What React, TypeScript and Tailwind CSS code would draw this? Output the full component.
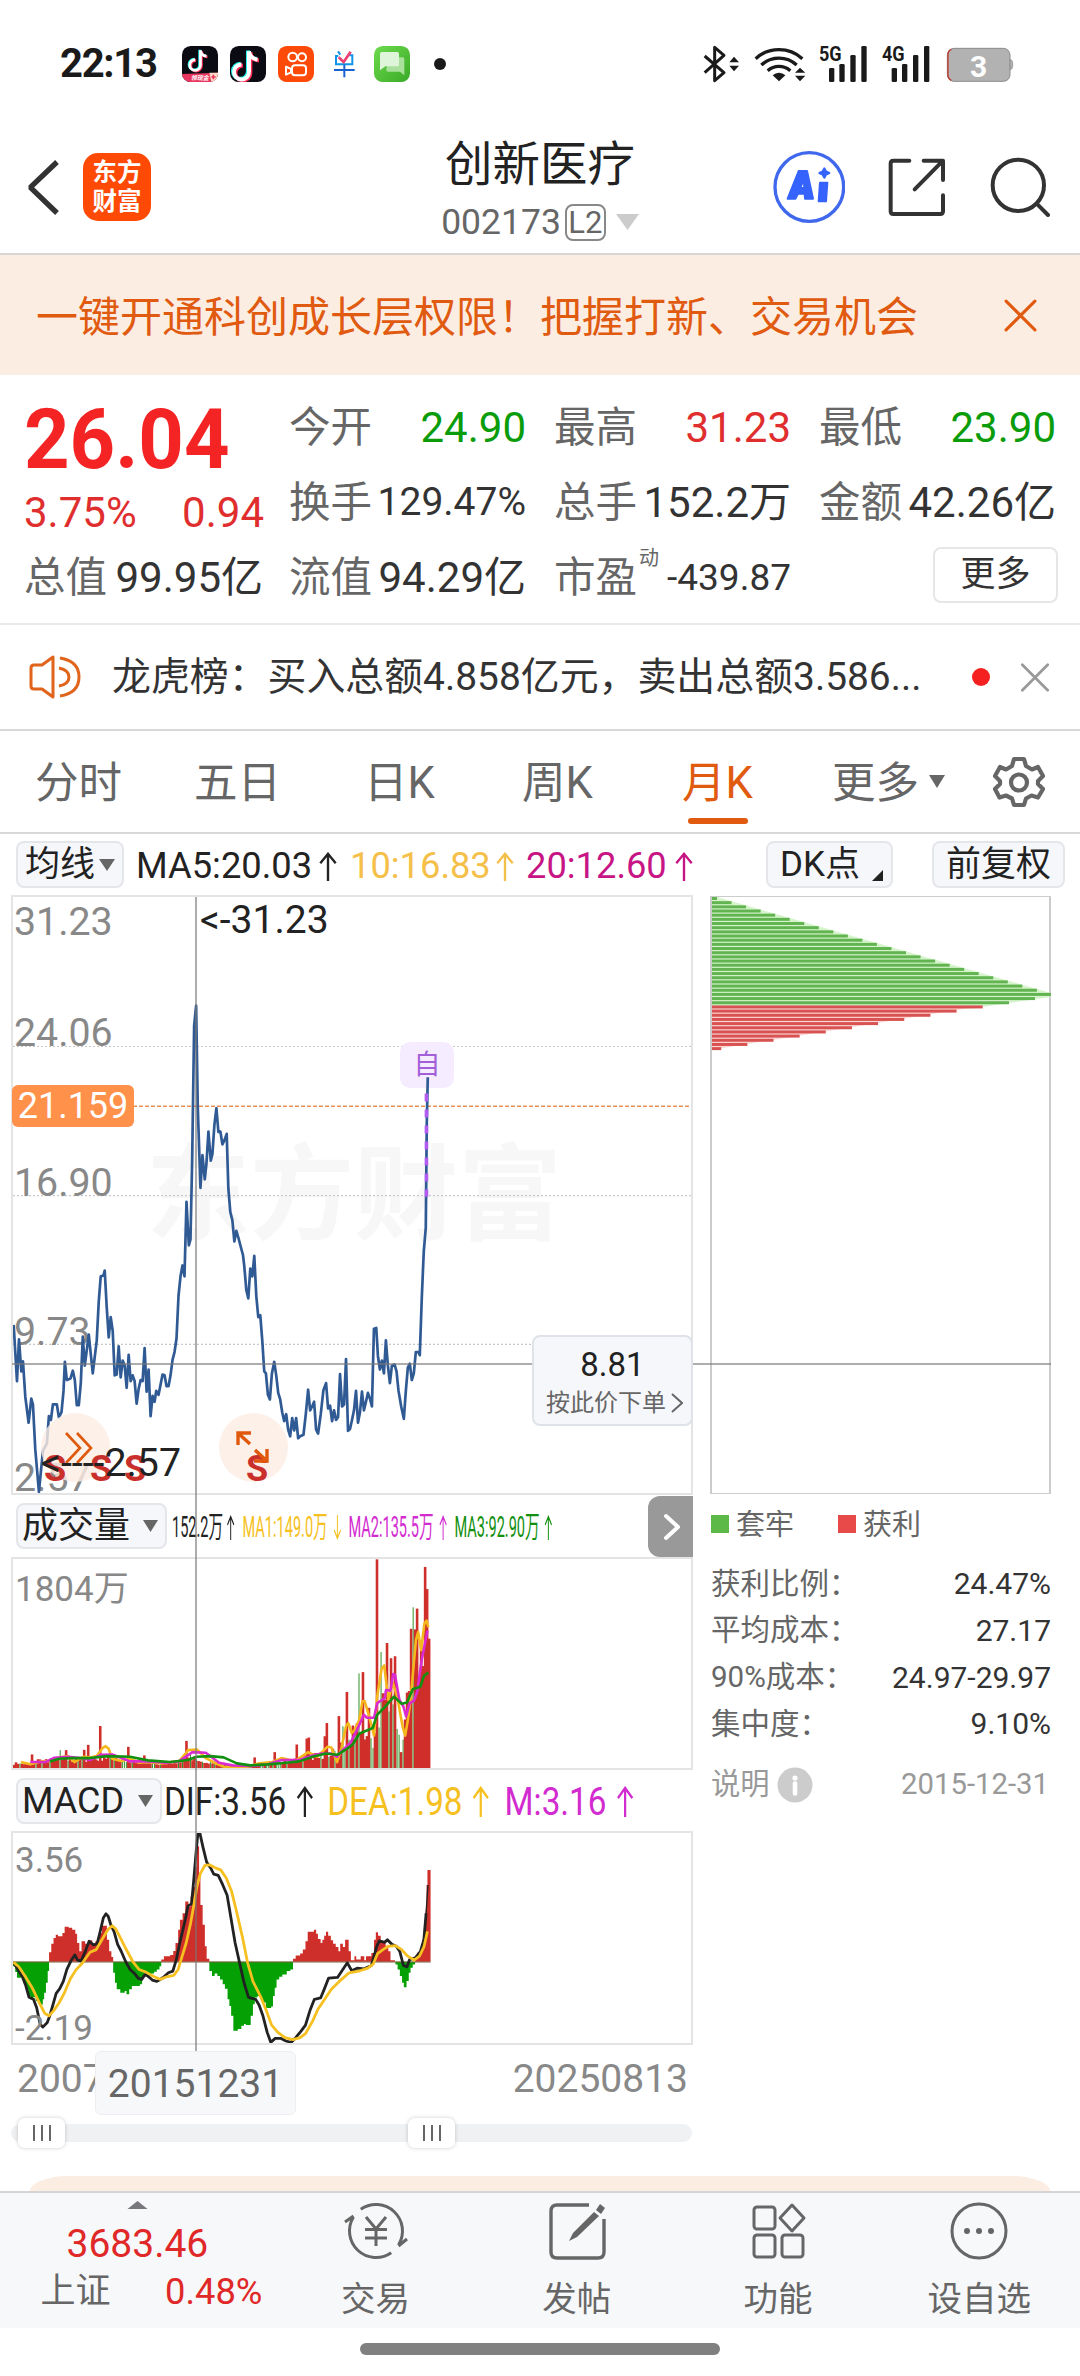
import React from "react";

const SANS = "font-['Roboto','Noto_Sans_CJK_SC',sans-serif]";

/* ---------- small glyphs ---------- */

function TriDown({ className }: { className: string }) {
  return (
    <svg viewBox="0 0 10 10" preserveAspectRatio="none" className={className} fill="currentColor">
      <path d="M0 0H10L5 10Z" />
    </svg>
  );
}

function Arrow({ down, className = "" }: { down?: boolean; className?: string }) {
  return (
    <svg viewBox="0 0 20 32" className={`${className} ${down ? "rotate-180" : ""}`} fill="none" stroke="currentColor" strokeWidth="2.6">
      <path d="M10 32V2M1.5 12.5L10 2L18.5 12.5" />
    </svg>
  );
}

function Cross({ className }: { className: string }) {
  return (
    <svg viewBox="0 0 32 32" className={className} fill="none" stroke="currentColor" strokeWidth="3" strokeLinecap="round">
      <path d="M2 2L30 30M30 2L2 30" />
    </svg>
  );
}

/* ---------- status bar ---------- */

const NOTE = "M57 12v58a21 21 0 1 1-21-21M57 12c2 14 12 22 24 23";

function MusicApp({ badge }: { badge?: boolean }) {
  return (
    <svg viewBox="0 0 108 108" className="h-9 w-9">
      <defs>
        <clipPath id="appTile">
          <rect width="108" height="108" rx="26" />
        </clipPath>
      </defs>
      <g clipPath="url(#appTile)">
        <rect width="108" height="108" fill="#0b0b14" />
        <g transform={badge ? "translate(12 4) scale(.76)" : "translate(-4 3) scale(1.07)"} fill="none" strokeWidth="11">
          <path d={NOTE} stroke="#25f4ee" transform="translate(-3 -2)" />
          <path d={NOTE} stroke="#fe2c55" transform="translate(4 3)" />
          <path d={NOTE} stroke="#fff" />
        </g>
        {badge && (
          <g>
            <path d="M0 84L108 80V108H0Z" fill="#e8365f" />
            <path d="M82 80H108V108H88Z" fill="#ffd9c8" />
            <text x="26" y="102" fontSize="18" fontWeight="700" fontStyle="italic" fill="#fff" fontFamily="Noto Sans CJK SC, sans-serif">
              领现金
            </text>
            <path d="M94 86v14M88 93h13" stroke="#e8365f" strokeWidth="5" />
          </g>
        )}
      </g>
    </svg>
  );
}

function StatusBar() {
  return (
    <div className="flex h-[128px] items-center pl-[60px] text-[#1a1a1a]">
      <div className="w-[122px] text-[40px] leading-none font-bold tracking-[-1.3px]">22:13</div>
      <div className="flex items-center gap-3">
        <MusicApp badge />
        <MusicApp />
        <svg viewBox="0 0 108 108" className="h-9 w-9" fill="none" stroke="#fff" strokeWidth="6">
          <rect width="108" height="108" rx="26" fill="#fe4a08" stroke="none" />
          <circle cx="44" cy="33" r="13" />
          <circle cx="72" cy="34" r="12" />
          <rect x="42" y="58" width="42" height="30" rx="9" />
          <path d="M24 62L39 69V79L24 86Z" strokeLinejoin="round" />
        </svg>
        <svg viewBox="0 0 108 108" className="h-9 w-9" fill="none" strokeWidth="6">
          <path d="M36 16l7 10M27 30h10M30 28V55H79V28M70 28h12" stroke="#1193e8" />
          <path d="M38 34l15 14L74 17" stroke="#ec3f74" strokeWidth="8" />
          <path d="M24 72H86M55 56V94" stroke="#1a62d0" />
        </svg>
        <svg viewBox="0 0 108 108" className="h-9 w-9">
          <defs>
            <linearGradient id="msg" x1="0" y1="0" x2="1" y2="1">
              <stop offset="0" stopColor="#6ddb4c" />
              <stop offset="1" stopColor="#3aaa28" />
            </linearGradient>
          </defs>
          <rect width="108" height="108" rx="26" fill="url(#msg)" />
          <path d="M40 34H86a5 5 0 0 1 5 5V88L78 77H42a5 5 0 0 1-5-5Z" fill="#a9e09c" />
          <path d="M23 18H70a5 5 0 0 1 5 5V56a5 5 0 0 1-5 5H34L18 73V23a5 5 0 0 1 5-5Z" fill="#dff5da" />
        </svg>
      </div>
      <div className="ml-6 h-3 w-3 rounded-full bg-[#1a1a1a]" />
      <svg viewBox="0 0 960 120" className="mr-[60px] ml-auto h-10 w-[320px]" fill="#1a1a1a">
        <g transform="translate(-30 -30)">
          <path d="M44 66L102 116L74 140V40L102 64L44 116" fill="none" stroke="#1a1a1a" strokeWidth="9" strokeLinejoin="round" />
          <path d="M118 85L132 68L147 85ZM118 95L132 112L147 95Z" />
          <g fill="none" stroke="#1a1a1a" strokeWidth="10">
            <path d="M197 74A104 104 0 0 1 337 74" />
            <path d="M214 93A78 78 0 0 1 320 93" />
            <path d="M233 110A52 52 0 0 1 301 110" />
          </g>
          <path d="M248 124A27 27 0 0 1 286 124L267 142Z" />
          <path d="M315 116L330 101L346 116ZM315 125L330 142L346 125Z" />
          {[0, 188].map((dx) => (
            <g key={dx} transform={`translate(${dx} 0)`}>
              <rect x="417" y="102" width="16" height="42" rx="4" />
              <rect x="448" y="90" width="16" height="54" rx="4" />
              <rect x="481" y="63" width="16" height="81" rx="4" />
              <rect x="514" y="36" width="16" height="108" rx="4" />
            </g>
          ))}
          <text x="387" y="80" fontSize="62" fontWeight="700" fontFamily="Roboto, sans-serif" textLength="68" lengthAdjust="spacingAndGlyphs">5G</text>
          <text x="576" y="80" fontSize="62" fontWeight="700" fontFamily="Roboto, sans-serif" textLength="68" lengthAdjust="spacingAndGlyphs">4G</text>
          <rect x="772" y="43" width="188" height="99" rx="20" fill="#b2b2b2" stroke="#8a8a8a" strokeWidth="3" />
          <path d="M961 76q7 3 7 10v12q0 7-7 9Z" fill="#b2b2b2" stroke="#8a8a8a" strokeWidth="2" />
          <path d="M784 46Q774 50 774 62V122Q774 134 784 139" fill="none" stroke="#c0392b" strokeWidth="4" />
          <text x="866" y="128" fontSize="90" fontWeight="700" textAnchor="middle" fill="#fff" fontFamily="Roboto, sans-serif">3</text>
        </g>
      </svg>
    </div>
  );
}

/* ---------- header ---------- */

function Header() {
  return (
    <div className="flex h-[127px] border-b-2 border-[#d6d6d6]">
      <svg viewBox="0 0 96 165" className="mt-[32px] ml-[27px] h-[55px] w-8" fill="none" stroke="#333" strokeWidth="16" strokeLinejoin="bevel">
        <path d="M90 6L10 82L90 159" />
      </svg>
      <div className="mt-[25px] ml-[24px] flex h-[68px] w-[68px] flex-col items-center justify-center rounded-[15px] bg-[#ff4a05] text-[24.5px] leading-[29px] font-bold text-white">
        <span>东方</span>
        <span>财富</span>
      </div>
      <div className="ml-[262px] flex w-[254px] flex-col items-center">
        <div className="mt-[11px] text-[47.5px] leading-[52px] text-[#222]">创新医疗</div>
        <div className="mt-[12px] flex items-center text-[#666]">
          <span className="text-[35.5px] leading-[38px]">002173</span>
          <span className="ml-1 flex h-[37px] w-[41px] items-center justify-center rounded-[8px] border-2 border-[#888] text-[31px] leading-none">L2</span>
          <TriDown className="ml-[10px] h-4 w-[23px] text-[#ccc]" />
        </div>
      </div>
      <svg viewBox="0 0 216 216" className="mt-[23px] ml-[106px] h-[72px] w-[72px]">
        <circle cx="109" cy="108" r="103" fill="none" stroke="#3f68ec" strokeWidth="10" />
        <path
          fill="#3563fb"
          stroke="#3563fb"
          strokeWidth="6"
          strokeLinejoin="round"
          fillRule="evenodd"
          d="M77 60H102L120 143H96L95 128H75L67 143H44ZM92 85L82 111H94ZM141 95H163L159 151H137ZM154 52L159 61L169 66L159 71L154 80L149 71L139 66L149 61Z"
        />
      </svg>
      <svg viewBox="0 0 174 174" className="mt-[30px] ml-[43px] h-[58px] w-[58px]" fill="none" stroke="#333" strokeWidth="12" strokeLinecap="round" strokeLinejoin="round">
        <path d="M64 8H16Q8 8 8 16V160Q8 168 16 168H157Q165 168 165 160V112M107 8H165V66M162 11L80 94" />
      </svg>
      <svg viewBox="0 0 180 180" className="mt-[29px] ml-[44px] h-[60px] w-[60px]" fill="none" stroke="#333" strokeWidth="12" strokeLinecap="round">
        <circle cx="85" cy="85" r="77" />
        <path d="M140 140L174 174" />
      </svg>
    </div>
  );
}

/* ---------- quote ---------- */

type Q = { label: string; value: string; tone?: string; size?: string };

function Cell({ label, value, tone = "text-[#333]", size = "text-[42px]" }: Q) {
  return (
    <div className="flex h-[75px] w-[237px] items-center justify-between">
      <span className="text-[41.5px] leading-none text-[#666]">{label}</span>
      <span className={`${size} leading-none ${tone}`}>{value}</span>
    </div>
  );
}

function Quote() {
  return (
    <div className="flex h-[250px] border-b-2 border-[#eaeaea] pt-[15px] pl-6">
      <div className="w-[265px]">
        <div className="h-[94px] pt-[9px] text-[79.5px] leading-none font-bold text-[#f52424]">
          <span className="inline-block scale-y-[1.06]">26.04</span>
        </div>
        <div className="flex h-[58px] w-[240px] items-center justify-between text-[42px] leading-none text-[#e02e2e]">
          <span>3.75%</span>
          <span>0.94</span>
        </div>
        <div className="-mt-[2px] flex h-[75px] w-[239px] items-center justify-between">
          <span className="text-[41.5px] leading-none text-[#666]">总值</span>
          <span className="text-[42px] leading-none text-[#333]">99.95亿</span>
        </div>
      </div>
      <div className="grid h-[225px] grid-cols-[238px_238px_237px] gap-x-[27px]">
        <Cell label="今开" value="24.90" tone="text-[#0a9c0a]" />
        <Cell label="最高" value="31.23" tone="text-[#e02e2e]" />
        <Cell label="最低" value="23.90" tone="text-[#0a9c0a]" />
        <Cell label="换手" value="129.47%" size="text-[39px]" />
        <Cell label="总手" value="152.2万" />
        <Cell label="金额" value="42.26亿" />
        <Cell label="流值" value="94.29亿" />
        <div className="flex h-[75px] w-[237px] items-center justify-between">
          <span className="flex text-[41.5px] leading-none text-[#666]">
            市盈<span className="-mt-[9px] ml-[2px] text-[20px] leading-none">动</span>
          </span>
          <span className="text-[37px] leading-none text-[#333]">-439.87</span>
        </div>
        <div className="-mt-[3px] flex h-[75px] items-center justify-end">
          <div className="-mr-[2px] flex h-[56px] w-[125px] items-center justify-center rounded-[8px] border-2 border-[#e6e6e6] text-[35px] leading-none text-[#333]">
            更多
          </div>
        </div>
      </div>
    </div>
  );
}

function News() {
  return (
    <div className="flex h-[106px] items-center border-b-2 border-[#d8d8d8] pl-[29px]">
      <svg viewBox="0 0 52 44" className="h-[44px] w-[52px]" fill="none" stroke="#e0641c" strokeWidth="3" strokeLinejoin="round">
        <path d="M24 2V42L13 34H5Q2 34 2 31V13Q2 10 5 10H13ZM30 13Q40 15 40 22T30 31M31 3Q50 6 50 22T31 41" />
      </svg>
      <div className="ml-[31px] w-[840px] text-[38.9px] leading-none whitespace-nowrap text-[#333]">
        龙虎榜：买入总额4.858亿元，卖出总额3.586...
      </div>
      <div className="ml-[20px] h-[18px] w-[18px] rounded-full bg-[#f52020]" />
      <Cross className="ml-[30px] h-[29px] w-[30px] text-[#999]" />
    </div>
  );
}

function Tabs() {
  return (
    <div className="flex h-[103px] items-center border-b-2 border-[#d8d8d8] pl-[35px] text-[43.5px] leading-none text-[#666]">
      <span className="w-[159px] pt-1">分时</span>
      <span className="w-[170px] pt-1">五日</span>
      <span className="w-[158px] pt-1">日K</span>
      <span className="w-[160px] pt-1">周K</span>
      <span className="relative w-[150px] pt-1 text-[#e05a10]">
        月K
        <span className="absolute top-[60px] left-[6px] h-[6px] w-[60px] rounded-full bg-[#e05a10]" />
      </span>
      <span className="pt-1">更多</span>
      <TriDown className="ml-[10px] h-[13px] w-[16px]" />
      <svg viewBox="0 0 52 52" className="ml-[48px] h-[52px] w-[52px]" fill="none" stroke="currentColor" strokeWidth="4.2" strokeLinejoin="round">
        <path d="M21 3H31L33 10L39 13.500L45 11L50 20L45 25V28L50 33L45 41.500L38.500 39.500L33 42.500L31 49H21L19 42.500L13 39.500L6.500 41.500L2 33L7 28V25L2 20L7 11L13 13.500L19 10Z" />
        <circle cx="26" cy="26.500" r="8" />
      </svg>
    </div>
  );
}

const CHIP = "flex items-center rounded-[8px] border-2 border-[#e4e6ea] bg-[#f6f7fa] leading-none text-[#222]";

function MaBar() {
  return (
    <div className="flex h-[61px] items-center pl-4 text-[36.3px] leading-none">
      <div className={`${CHIP} h-[47px] w-[108px] justify-center text-[35px]`}>
        均线
        <TriDown className="ml-[4px] h-3 w-4 text-[#666]" />
      </div>
      <span className="ml-[12px] w-[182px] pt-[3px] text-[#222]">MA5:20.03</span>
      <Arrow className="mt-1 h-[29px] w-[20px] text-[#222]" />
      <span className="ml-[12px] w-[145px] pt-[3px] text-[#f5c04a]">10:16.83</span>
      <Arrow className="mt-1 h-[29px] w-[20px] text-[#f5c04a]" />
      <span className="ml-[11px] w-[148px] pt-[3px] text-[#c71585]">20:12.60</span>
      <Arrow className="mt-1 h-[29px] w-[20px] text-[#c71585]" />
      <div className={`${CHIP} ml-[72px] h-[47px] w-[127px] pl-[12px] text-[35px]`}>
        DK点
        <svg viewBox="0 0 10 10" className="mt-[22px] ml-[12px] h-[11px] w-[11px]">
          <path d="M10 0V10H0Z" fill="#222" />
        </svg>
      </div>
      <div className={`${CHIP} ml-[39px] h-[47px] w-[133px] justify-center text-[35px]`}>前复权</div>
    </div>
  );
}

/* ---------- price chart ---------- */

const PRICE =
  "38,1120 48,1265 54,1157 61,1240 66,1214 73,1305 83,1372 91,1310 96,1325 103,1440 114,1550 126,1445 138,1425 144,1355 150,1365 156,1325 168,1325 174,1358 182,1345 188,1290 192,1215 198,1262 209,1258 216,1238 222,1262 228,1327 234,1327 240,1270 246,1150 252,1225 264,1145 276,1245 288,1160 294,1060 300,995 308,993 312,980 318,1075 324,1152 330,1100 336,1135 342,1250 348,1248 354,1175 360,1255 366,1212 372,1225 378,1282 384,1197 390,1265 396,1250 402,1265 408,1323 414,1285 420,1262 426,1265 432,1180 438,1292 444,1235 450,1355 456,1303 462,1318 467,1290 474,1300 486,1248 492,1250 498,1278 504,1278 510,1250 516,1210 522,1190 528,1155 534,1045 540,995 546,967 552,995 558,803 565,915 570,900 575,700 581,350 587,298 592,560 600,767 606,683 613,745 618,705 624,622 631,697 636,680 642,605 648,562 654,623 660,622 666,655 672,645 679,628 684,770 690,830 696,850 702,905 708,878 714,895 720,915 728,940 732,970 738,1030 744,1052 750,975 756,995 762,942 768,1045 774,1100 780,1095 786,1160 792,1240 797,1245 803,1300 809,1312 815,1245 822,1215 828,1250 834,1295 840,1312 846,1345 852,1368 858,1350 864,1390 870,1407 876,1360 882,1392 888,1360 894,1412 900,1407 910,1403 917,1350 924,1287 930,1340 936,1330 942,1318 948,1390 954,1400 962,1350 970,1288 978,1270 984,1335 990,1328 996,1368 1002,1340 1008,1365 1014,1358 1020,1247 1026,1330 1032,1325 1038,1208 1044,1393 1050,1388 1056,1365 1062,1340 1068,1290 1074,1372 1080,1345 1086,1292 1092,1340 1098,1318 1104,1295 1110,1310 1116,1330 1122,1130 1129,1128 1134,1200 1140,1235 1146,1212 1152,1245 1158,1160 1164,1225 1170,1270 1176,1225 1184,1222 1190,1240 1196,1290 1204,1330 1212,1362 1218,1290 1224,1230 1230,1220 1236,1262 1242,1245 1248,1190 1256,1190 1260,1198 1266,1050 1272,930 1278,870 1281,600 1284,482";

const FINE = { vectorEffect: "non-scaling-stroke" as const };
const SCALE_TEXT = "absolute text-[39.3px] leading-none text-[#888]";
const MARK = "absolute text-[36px] leading-none font-bold text-[#c9302c]";

function PriceChart() {
  return (
    <div className="relative h-[600px] w-[682px] border-2 border-[#e4e4e4]">
      <div className="absolute top-[248px] left-[133px] text-[104px] leading-none font-bold whitespace-nowrap text-[#f7f7f7]">东方财富</div>
      <svg viewBox="36 18 2040 1535" preserveAspectRatio="none" className="absolute inset-0 h-full w-full" fill="none">
        {[403, 787, 1170].map((y) => (
          <path key={y} d={`M36 ${y}H2076`} stroke="#c8c8c8" strokeWidth="1.2" strokeDasharray="2 2" style={FINE} />
        ))}
        <path d="M36 557H2076" stroke="#ec8f55" strokeWidth="1.6" strokeDasharray="4 2" style={FINE} />
      </svg>
      <span className={`${SCALE_TEXT} top-[6px] left-[1px]`}>31.23</span>
      <span className={`${SCALE_TEXT} top-[117px] left-[1px]`}>24.06</span>
      <span className={`${SCALE_TEXT} top-[267px] left-[1px]`}>16.90</span>
      <span className={`${SCALE_TEXT} top-[416px] left-[1px]`}>9.73</span>
      <span className={`${SCALE_TEXT} top-[562px] left-[1px]`}>2.57</span>
      <div className="absolute top-[145px] left-[387px] flex h-[46px] w-[54px] items-center justify-center rounded-[10px] bg-[#f5edff] text-[27px] leading-none text-[#a35fd8]">
        自
      </div>
      <svg viewBox="36 18 2040 1535" preserveAspectRatio="none" className="absolute inset-0 h-full w-full" fill="none">
        <polyline points={PRICE} stroke="#305a94" strokeWidth="2.7" strokeLinejoin="round" style={FINE} />
        <path d="M1280 524V790" stroke="#b05cf0" strokeWidth="3.6" strokeDasharray="8 8" style={FINE} />
      </svg>
      <div className="absolute top-[188px] -left-[1px] flex h-[42px] w-[122px] items-center justify-center rounded-[6px] bg-[#ff914a] text-[36px] leading-none text-white">
        21.159
      </div>
      <div className="absolute top-[516px] left-[28px] h-[69px] w-[69px] rounded-full bg-[#fdece3]/80" />
      <div className="absolute top-[516px] left-[206px] h-[69px] w-[69px] rounded-full bg-[#fdece3]/80" />
      <span className={`${MARK} top-[554px] left-[31px]`}>S</span>
      <span className={`${MARK} top-[554px] left-[77px]`}>S</span>
      <span className={`${MARK} top-[554px] left-[111px]`}>S</span>
      <span className={`${MARK} top-[554px] left-[233px]`}>S</span>
      <svg viewBox="0 0 28 32" className="absolute top-[535px] left-[52px] h-8 w-7" fill="none" stroke="#e0580c" strokeWidth="2.6">
        <path d="M1 1L15 16L1 31M12 1L26 16L12 31" />
      </svg>
      <svg viewBox="0 0 33 34" className="absolute top-[533px] left-[223px] h-[34px] w-[33px]" fill="none" stroke="#e0580c" strokeWidth="3.4">
        <path d="M2 15V3H15M2 3L14 14M31 19V31H18M31 31L19 20" />
      </svg>
      <span className="absolute top-[4px] left-[187px] text-[39px] leading-none whitespace-nowrap text-[#222]">&lt;-31.23</span>
      <span className="absolute top-[547px] left-[28px] text-[39.3px] leading-none whitespace-nowrap text-[#222]">&lt;----2.57</span>
    </div>
  );
}

/* ---------- volume chart ---------- */

const ENVELOPE: [number, number][] = [
  [27, 848], [60, 850], [100, 832], [145, 828], [200, 832], [240, 828], [300, 840], [380, 850], [420, 822], [450, 835], [500, 852],
  [560, 858], [600, 850], [640, 840], [700, 822], [740, 812], [765, 780], [800, 720], [820, 720], [835, 770], [850, 650], [870, 650],
  [884, 620], [890, 760], [904, 780], [912, 640], [930, 600], [964, 500],
];

const SPIKES: Record<number, number> = {
  225: 739, 198: 796, 185: 811, 288: 802, 418: 784, 324: 828, 145: 812, 70: 825, 570: 834, 615: 818, 665: 795, 690: 774, 686: 777,
  731: 730, 726: 770, 761: 709, 776: 636, 811: 576, 825: 684, 843: 235, 865: 488, 857: 640, 878: 534, 883: 528, 913: 638, 920: 445,
  931: 447, 937: 384, 946: 480, 951: 258, 956: 325, 961: 475,
};
const GREEN_SPIKES: Record<number, number> = { 803: 580, 852: 515, 924: 380, 891: 748, 896: 765, 901: 780, 131: 812, 767: 740, 870: 695, 834: 805 };

function envelopeAt(x: number) {
  for (let i = 1; i < ENVELOPE.length; i++) {
    const [x0, y0] = ENVELOPE[i - 1];
    const [x1, y1] = ENVELOPE[i];
    if (x <= x1) return y0 + ((x - x0) / (x1 - x0)) * (y1 - y0);
  }
  return 500;
}

const STEP = 4.505;

function lookup(table: Record<number, number>, x: number) {
  const hit = Object.keys(table).find((k) => Math.abs(Number(k) - x) <= STEP / 2);
  return hit ? table[Number(hit)] : undefined;
}

const VOLUME = Array.from({ length: 208 }, (_, i) => {
  const x = 27 + STEP * (i + 0.5);
  const n = Math.abs(Math.sin((i + 1) * 12.9898) * 43758.5453) % 1;
  const m = Math.abs(Math.sin((i + 1) * 78.233) * 12543.123) % 1;
  const red = lookup(SPIKES, x);
  const green = lookup(GREEN_SPIKES, x);
  const base = envelopeAt(x);
  const top = red ?? green ?? Math.min(860, base + n * (866 - base) * (x > 905 ? 0.1 : 0.5));
  const up = red !== undefined || (green === undefined && (x > 905 || m > 0.3));
  return { x, top, up };
});

function VolumeChart() {
  return (
    <div className="relative h-[213px] w-[682px] border-2 border-[#e4e4e4]">
      <svg viewBox="27 234 1523 632" preserveAspectRatio="none" className="absolute inset-0 h-full w-full" fill="none">
        {VOLUME.map(({ x, top, up }) =>
          up ? (
            <rect key={x} x={x - 2.9} y={top} width="5.8" height={866 - top} fill="#cf2f2a" />
          ) : (
            <rect key={x} x={x - 1} y={top} width="2.2" height={866 - top} fill="#2c8f22" />
          ),
        )}
        <g strokeWidth="2.6" strokeLinejoin="round">
          <polyline
            stroke="#f5b81c"
            style={FINE}
            points="45,848 66,855 90,846 110,845 130,834 150,830 165,848 185,832 200,834 215,830 228,806 235,800 242,808 250,838 270,845 290,838 310,850 330,848 360,852 400,846 415,822 420,812 440,810 448,820 460,836 480,850 500,862 550,864 580,852 610,848 630,836 660,845 690,818 710,832 733,802 742,804 755,848 765,805 775,740 780,730 788,760 794,752 805,720 812,664 817,664 825,700 838,768 845,650 855,566 861,556 870,660 880,608 890,650 902,740 908,768 914,720 920,660 932,480 937,455 944,510 951,430 956,420 960,440"
          />
          <polyline
            stroke="#da2bd0"
            style={FINE}
            points="66,848 100,848 120,835 150,832 180,836 200,842 225,826 250,825 275,838 290,846 330,846 370,850 400,846 430,818 460,820 490,850 520,858 560,860 600,855 630,842 670,842 700,828 720,822 740,822 755,832 765,815 785,790 800,750 815,705 822,714 838,714 845,670 862,655 865,630 875,632 881,582 885,584 895,660 904,680 910,710 918,670 928,662 935,635 945,540 958,450"
          />
          <polyline
            stroke="#12900f"
            style={FINE}
            points="110,846 130,838 160,836 200,836 240,830 290,832 330,843 380,848 420,842 440,832 470,830 500,834 530,852 560,858 600,855 640,850 670,846 700,832 730,822 755,826 775,810 790,795 805,762 835,745 845,705 860,685 883,650 900,672 912,668 925,628 942,620 950,588 960,577"
          />
        </g>
      </svg>
      <span className="absolute top-[13px] left-[2px] text-[35px] leading-none text-[#888]">1804万</span>
    </div>
  );
}

/* ---------- MACD chart ---------- */

function MacdChart() {
  return (
    <div className="relative h-[214px] w-[682px] border-2 border-[#e4e4e4]">
      <svg viewBox="27 188 1523 634" preserveAspectRatio="none" className="absolute inset-0 h-full w-full" fill="none">
        <g fill="#cf2f2a">
          <path d="M108 577V548H113V522H118V505H123V495H128V500H138V490H143V471H152V474H160V480H167V492H171V520H176V545H181V515H189V522H196V512H205V525H212V515H221V490H227V468H238V510H243V545H248V562H252V577Z" />
          <path d="M360 577V570H366V560H380V556H387V544H392V520H398V480H402V450H408V430H414V395H421V410H426V380H431V350H436V290H440V228H445V320H448V405H453V465H458V530H462V568H468V577Z" />
          <path d="M656 577V568H662V558H672V552H678V540H684V515H689V486H703V480H708V492H712V508H718V520H722V510H726V498H730V486H735V498H741V512H746V522H752V532H758V545H762V522H768V532H773V510H781V545H786V572H794V560H798V570H808V560H816V572H820V560H832V550H838V510H842V488H847V498H853V520H864V530H870V545H875V572H885V577Z" />
          <path d="M930 577V560H936V548H942V535H946V510H950V470H954V420H956V345H958V300H965V577Z" />
        </g>
        <g fill="#04a004">
          <path d="M27 577V590H32V608H36V625H45V615H50V640H56V660H61V680H66V690H72V684H78V695H85V706H94V690H97V670H101V640H105V605H108V577Z" />
          <path d="M252 577V610H256V640H260V660H268V670H278V665H282V675H288V660H294V650H312V645H317V620H322V612H330V620H338V612H344V607H350V600H356V590H360V577Z" />
          <path d="M468 577V605H474V620H480V612H486V620H492V630H498V645H503V658H509V690H513V710H517V740H522V785H532V780H540V770H546V765H550V768H561V740H566V705H570V685H576V680H582V690H588V700H595V716H607V712H611V680H615V655H619V630H625V622H632V615H642V605H650V600H656V577Z" />
          <path d="M886 577V585H891V600H896V620H901V640H905V654H911V635H916V610H920V595H925V585H930V577Z" />
        </g>
        <path d="M27 577.500H965" stroke="#7a5a3a" strokeWidth="1" style={FINE} />
        <g strokeWidth="2.8" strokeLinejoin="round">
          <polyline
            stroke="#222"
            style={FINE}
            points="28,578 38,600 48,622 56,650 63,684 73,690 80,715 88,765 94,774 104,760 110,738 116,710 124,672 132,658 140,636 148,600 158,572 166,556 172,572 180,574 188,550 198,515 208,526 216,522 222,490 230,444 236,432 241,440 247,466 254,486 262,524 270,545 280,576 290,600 300,612 308,626 316,630 324,615 330,620 340,632 350,636 358,630 366,622 376,610 386,605 394,570 400,530 406,495 414,450 420,408 428,402 433,330 438,250 442,192 447,190 454,232 462,276 472,296 478,312 488,316 498,344 508,376 516,440 526,520 536,580 546,640 556,684 572,690 580,708 588,738 598,790 606,820 616,808 628,808 640,816 652,820 662,806 674,786 684,768 694,724 704,690 718,686 726,660 736,626 756,624 766,604 778,580 788,604 800,596 816,598 832,588 838,560 844,530 850,514 862,518 868,510 878,524 888,530 896,546 904,588 912,592 918,570 930,566 942,546 950,510 955,430"
          />
          <polyline stroke="#222" strokeWidth="1.4" style={FINE} points="955,430 959,345" />
          <polyline
            stroke="#f5c020"
            style={FINE}
            points="28,578 40,592 54,620 70,655 86,700 98,732 108,740 118,725 130,702 142,672 156,628 168,602 182,582 200,548 214,540 226,512 240,480 250,468 258,478 268,504 280,536 296,576 310,600 326,608 344,622 358,630 372,622 388,618 398,600 406,564 416,520 426,460 434,400 440,350 448,310 458,286 468,284 480,292 494,300 506,324 518,364 530,430 542,500 554,580 566,636 584,684 596,724 608,768 622,790 638,806 656,812 672,806 684,794 700,756 712,720 726,692 742,660 760,636 782,610 806,604 824,596 836,584 846,552 858,540 870,530 886,528 900,540 912,558 928,572 940,560 950,532 958,485"
          />
        </g>
      </svg>
      <span className="absolute top-[10px] left-[2px] text-[35px] leading-none text-[#888]">3.56</span>
      <span className="absolute top-[178px] left-[2px] text-[35px] leading-none text-[#888]">-2.19</span>
    </div>
  );
}

function LeftCharts() {
  return (
    <div className="relative w-[692px] pl-[11px]">
      <PriceChart />
      <div className="flex h-[62px] items-center pl-[5px]">
        <div className={`${CHIP} h-[46px] w-[151px] shrink-0 pl-[4px] text-[36px]`}>
          成交量
          <TriDown className="ml-[13px] h-3 w-[15px] text-[#666]" />
        </div>
        <div className="ml-[5px] flex w-[480px] shrink-0 origin-left scale-x-[0.485] items-center pt-[2px] text-[30px] leading-none whitespace-nowrap">
          <div className="flex items-center text-[#222]">
            152.2万
            <Arrow className="ml-[6px] h-[25px] w-[20px]" />
          </div>
          <div className="ml-[14px] flex items-center text-[#f5c020]">
            MA1:149.0万
            <Arrow down className="ml-[10px] h-[25px] w-[20px]" />
          </div>
          <div className="ml-[13px] flex items-center text-[#d22bd0]">
            MA2:135.5万
            <Arrow className="ml-[10px] h-[25px] w-[20px]" />
          </div>
          <div className="ml-[13px] flex items-center text-[#12900f]">
            MA3:92.90万
            <Arrow className="ml-[8px] h-[25px] w-[20px]" />
          </div>
        </div>
      </div>
      <VolumeChart />
      <div className="flex h-[61px] items-center pl-[5px]">
        <div className={`${CHIP} h-[46px] w-[146px] shrink-0 pl-[4px] text-[36px]`}>
          MACD
          <TriDown className="ml-[14px] h-3 w-[15px] text-[#666]" />
        </div>
        <div className="ml-[2px] flex w-[520px] shrink-0 origin-left scale-x-[0.875] items-center pt-[2px] text-[38px] leading-none whitespace-nowrap">
          <div className="flex items-center text-[#222]">
            DIF:3.56
            <Arrow className="ml-[10px] h-[31px] w-[22px]" />
          </div>
          <div className="ml-[15px] flex items-center text-[#f5c020]">
            DEA:1.98
            <Arrow className="ml-[10px] h-[31px] w-[22px]" />
          </div>
          <div className="ml-[16px] flex items-center text-[#d22bd0]">
            M:3.16
            <Arrow className="ml-[10px] h-[31px] w-[22px]" />
          </div>
        </div>
      </div>
      <MacdChart />
      <div className="relative flex h-[72px] items-start justify-between pt-[15px] pr-[4px] pl-[6px] text-[39px] leading-none text-[#888]">
        <span>2007</span>
        <span>20250813</span>
        <div className="absolute top-[6px] left-[84px] flex h-[64px] w-[201px] items-center justify-center rounded-[6px] border border-[#eceef1] bg-[#f7f8fa] pt-[2px] text-[39px] text-[#666]">
          20151231
        </div>
      </div>
      <div className="relative mt-[7px] h-[18px] w-[681px] rounded-full bg-[#f0f1f3]">
        {["left-[7px]", "left-[397px]"].map((pos) => (
          <div key={pos} className={`absolute -top-[6px] ${pos} flex h-[30px] w-[47px] items-center justify-center gap-[6px] rounded-[7px] bg-white shadow-[0_0_4px_rgba(0,0,0,0.2)]`}>
            <i className="h-4 w-[2px] bg-[#666]" />
            <i className="h-4 w-[2px] bg-[#666]" />
            <i className="h-4 w-[2px] bg-[#666]" />
          </div>
        ))}
      </div>

      {/* crosshair and the widgets floating over the charts */}
      <div className="absolute top-[2px] left-[195px] h-[1154px] w-[2px] bg-[#777]/60" />
      <div className="absolute top-[468px] left-[12px] h-[2px] w-[1039px] bg-[#777]/60" />
      <div className="absolute top-[440px] left-[532px] flex h-[91px] w-[161px] flex-col items-center rounded-[8px] border-2 border-[#dfe2e8] bg-[#f6f7fa] pt-[11px]">
        <span className="text-[33px] leading-[34px] text-[#222]">8.81</span>
        <span className="mt-[7px] ml-1 flex items-center text-[24px] leading-[28px] whitespace-nowrap text-[#666]">
          按此价下单
          <svg viewBox="0 0 12 20" className="ml-[5px] h-[20px] w-[12px]" fill="none" stroke="#666" strokeWidth="2">
            <path d="M1 1L11 10L1 19" />
          </svg>
        </span>
      </div>
      <div className="absolute top-[601px] left-[648px] flex h-[61px] w-[45px] items-center justify-center rounded-l-[12px] bg-[#999]">
        <svg viewBox="0 0 18 28" className="ml-[3px] h-7 w-[18px]" fill="none" stroke="#fff" strokeWidth="4" strokeLinecap="round" strokeLinejoin="round">
          <path d="M3 3L15 14L3 25" />
        </svg>
      </div>
    </div>
  );
}

/* ---------- chip distribution ---------- */

const TRAPPED = [...Array.from({ length: 24 }, (_, i) => 5 + i * 14.54), 323, 297];
const PROFIT = Array.from({ length: 11 }, (_, i) => 270.7 - i * 26.15);

function InfoRow({ label, value }: { label: string; value: string }) {
  return (
    <div className="flex h-[46.700px] items-center justify-between leading-none">
      <span className="text-[29.5px] text-[#666]">{label}</span>
      <span className="text-[30px] text-[#333]">{value}</span>
    </div>
  );
}

function Distribution() {
  return (
    <div className="ml-[18px] w-[341px]">
      <div className="mt-[1px] h-[598px] w-[341px] border border-x-2 border-[#ccc]">
        <svg viewBox="0 0 339 596" className="h-[596px] w-[339px]">
          <path d="M0 0H5L339 96V100L260 111.500H0Z" fill="#c4efb6" opacity=".7" />
          <path d="M0 109H270L5 152H0Z" fill="#f9c4c0" opacity=".7" />
          {TRAPPED.map((w, i) => (
            <rect key={i} x="0" y={i * 4.17} width={w} height="3" fill="#62b450" />
          ))}
          {PROFIT.map((w, i) => (
            <rect key={i} x="0" y={(i + 26) * 4.17} width={w} height="3" fill="#d95252" />
          ))}
        </svg>
      </div>
      <div className="mt-[13px] flex h-[34px] items-center text-[29px] leading-none text-[#666]">
        <i className="ml-[1px] h-[18px] w-[18px] bg-[#5cb947]" />
        <span className="ml-[7px] pt-[2px]">套牢</span>
        <i className="ml-[44px] h-[18px] w-[18px] bg-[#e84a4a]" />
        <span className="ml-[7px] pt-[2px]">获利</span>
      </div>
      <div className="mt-[20px] pl-[1px]">
        <InfoRow label="获利比例：" value="24.47%" />
        <InfoRow label="平均成本：" value="27.17" />
        <InfoRow label="90%成本：" value="24.97-29.97" />
        <InfoRow label="集中度：" value="9.10%" />
      </div>
      <div className="mt-[19px] flex h-[36px] items-center pr-[2px] pl-[1px] text-[29.3px] leading-none text-[#999]">
        说明
        <svg viewBox="0 0 36 36" className="ml-[7px] h-9 w-9">
          <circle cx="18" cy="18" r="17.500" fill="#ccc" />
          <circle cx="18" cy="11" r="2.600" fill="#fff" />
          <path d="M18 16.500V26.500" stroke="#fff" strokeWidth="4.600" strokeLinecap="round" />
        </svg>
        <span className="ml-auto">2015-12-31</span>
      </div>
    </div>
  );
}

/* ---------- bottom navigation ---------- */

function NavItem({ label, children }: { label: string; children: React.ReactNode }) {
  return (
    <div className="flex w-[201.5px] flex-col items-center pt-[8px] text-[34.5px] leading-none text-[#666]">
      <svg viewBox="0 0 68 60" className="mb-[21px] h-[60px] w-[68px]" fill="none" stroke="#666" strokeWidth="3">
        {children}
      </svg>
      <span>{label}</span>
    </div>
  );
}

function BottomNav() {
  return (
    <div className="flex h-[137px] border-t-2 border-[#d4d4d6] bg-[#f7f8fa]">
      <div className="flex w-[275px] flex-col items-center pt-[8px]">
        <svg viewBox="0 0 20 8" className="h-2 w-[21px]">
          <path d="M10 0L20 8H0Z" fill="#77777c" />
        </svg>
        <span className="mt-[12px] text-[39px] leading-[46px] text-[#e02828]">3683.46</span>
        <div className="mt-[5px] ml-[28px] flex w-[222px] items-center justify-between leading-[40px]">
          <span className="text-[35px] text-[#666]">上证</span>
          <span className="text-[36.3px] text-[#e02828]">0.48%</span>
        </div>
      </div>
      <NavItem label="交易">
        <path d="M19.800 8.300A26.500 26.500 0 0 1 57.500 44M57.500 45L66 38M50.200 51.700A26.500 26.500 0 0 1 12.500 16M12.500 15L4 21" />
        <path d="M25 16L35 28L45 16M35 28V45M24 28.500H46M24 37H46" />
      </NavItem>
      <NavItem label="发帖">
        <path d="M46 4H14Q8 4 8 10V51Q8 57 14 57H55Q61 57 61 51V18" strokeWidth="3.4" />
        <path d="M57 3L62 7L58 13L53 9ZM51 11L56 15L34 36L26 40L30 32Z" fill="#666" stroke="none" />
      </NavItem>
      <NavItem label="功能">
        <rect x="10" y="6" width="21" height="22" rx="3" />
        <rect x="10" y="34" width="21" height="22" rx="3" />
        <rect x="38" y="34" width="21" height="22" rx="3" />
        <path d="M48 4L60 17L48 30L36 17Z" strokeLinejoin="round" />
      </NavItem>
      <NavItem label="设自选">
        <circle cx="34" cy="30" r="27" />
        <g fill="#666" stroke="none">
          <circle cx="22" cy="30" r="3" />
          <circle cx="34" cy="30" r="3" />
          <circle cx="46" cy="30" r="3" />
        </g>
      </NavItem>
    </div>
  );
}

export default function App() {
  return (
    <div className={`${SANS} flex h-[2376px] w-[1080px] flex-col overflow-hidden bg-white`}>
      <StatusBar />
      <Header />
      <div className="flex h-[120px] items-center bg-[#fcede3] pl-[36px] text-[42px] leading-none whitespace-nowrap text-[#e05a10]">
        <span className="w-[968px] pt-[5px]">一键开通科创成长层权限！把握打新、交易机会</span>
        <Cross className="h-[33px] w-[33px]" />
      </div>
      <Quote />
      <News />
      <Tabs />
      <MaBar />
      <div className="flex h-[1281px]">
        <LeftCharts />
        <Distribution />
      </div>
      <div className="mx-[30px] h-[15px] rounded-t-[38px_15px] bg-[#fcede3]" />
      <BottomNav />
      <div className="flex h-[48px] items-start justify-center pt-[15px]">
        <div className="h-[12px] w-[360px] rounded-[6px] bg-[#808080]" />
      </div>
    </div>
  );
}
